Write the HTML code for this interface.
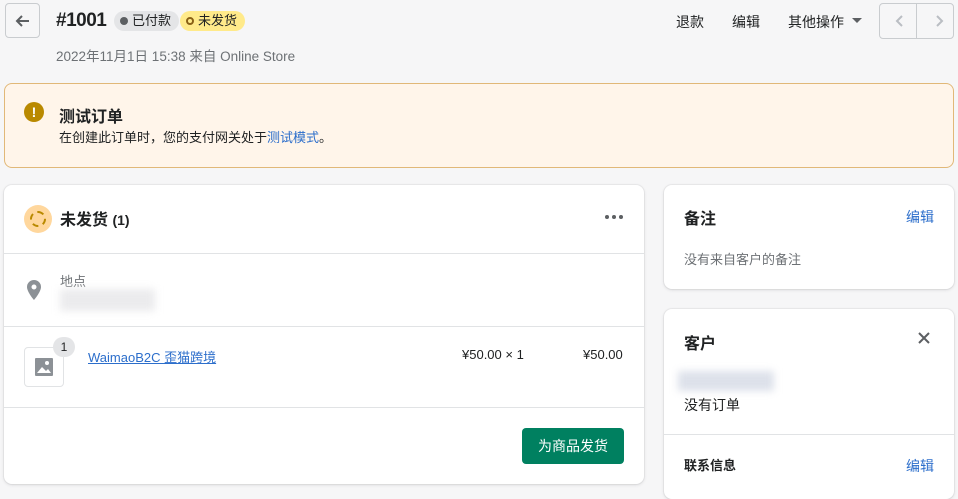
<!DOCTYPE html><html><head><meta charset="utf-8"><style>
*{box-sizing:border-box;margin:0;padding:0}
body{width:958px;height:487px;overflow:hidden;background:#f6f6f7;font-family:"Liberation Sans","Noto Sans CJK SC",sans-serif;color:#202223;font-size:14px;position:relative}
.a{position:absolute}
.card{position:absolute;background:#fff;border-radius:8px;box-shadow:0 0 0 1px rgba(63,63,68,.05),0 1px 3px rgba(63,63,68,.15)}
.hr{position:absolute;left:0;right:0;height:1px;background:#e1e3e5}
.link{color:#2c6ecb}
</style></head><body>
<div class="a" style="left:5px;top:3px;width:35px;height:35px;border:1px solid #c9cccf;border-radius:4px;background:#f6f6f7"></div>
<svg class="a" style="left:13px;top:11px" width="20" height="20" viewBox="0 0 20 20"><path d="M16 10H4M9 5l-5 5 5 5" stroke="#5c5f62" stroke-width="2" fill="none"/></svg>
<div class="a" style="left:56px;top:10px;font-size:19px;font-weight:bold;letter-spacing:-0.5px">#1001</div>
<div class="a" style="left:114px;top:11px;height:20px;padding:0 8px 0 18px;background:#e4e5e7;border-radius:10px;font-size:13px;line-height:20px">已付款</div>
<div class="a" style="left:120px;top:17px;width:8px;height:8px;border-radius:50%;background:#5c5f62"></div>
<div class="a" style="left:180px;top:11px;height:20px;padding:0 8px 0 18px;background:#ffea8a;border-radius:10px;font-size:13px;line-height:20px">未发货</div>
<div class="a" style="left:186px;top:17px;width:8px;height:8px;border-radius:50%;border:2px solid #8a6116"></div>
<div class="a" style="left:56px;top:45px;font-size:13.5px;color:#6d7175">2022年11月1日 15:38 来自 Online Store</div>
<div class="a" style="left:676px;top:12px">退款</div>
<div class="a" style="left:732px;top:12px">编辑</div>
<div class="a" style="left:788px;top:12px">其他操作</div>
<svg class="a" style="left:852px;top:17px" width="10" height="8"><path d="M0 1h10L5 6z" fill="#5c5f62"/></svg>
<div class="a" style="left:879px;top:3px;width:75px;height:36px;border:1px solid #c9cccf;border-radius:4px"></div>
<div class="a" style="left:916px;top:4px;width:1px;height:34px;background:#c9cccf"></div>
<svg class="a" style="left:890px;top:13px" width="60" height="16"><path d="M12 3l-5 5 5 5M47 3l5 5-5 5" stroke="#babec3" stroke-width="2" fill="none"/></svg>
<div class="a" style="left:4px;top:83px;width:950px;height:85px;background:#fff5ea;border:1px solid #e1b878;border-radius:8px"></div>
<div class="a" style="left:24px;top:102px;width:20px;height:20px;border-radius:50%;background:#b98900;color:#fff;font-weight:bold;font-size:14px;text-align:center;line-height:20px">!</div>
<div class="a" style="left:59px;top:103px;font-size:16px;font-weight:bold">测试订单</div>
<div class="a" style="left:59px;top:127px;font-size:13px">在创建此订单时，您的支付网关处于<span class="link">测试模式</span>。</div>
<div class="card" style="left:4px;top:185px;width:640px;height:299px">
 <div class="a" style="left:20px;top:20px;width:28px;height:28px;border-radius:50%;background:#ffd79d"></div>
 <div class="a" style="left:26px;top:26px;width:16px;height:16px;border-radius:50%;border:2px dashed #b98900"></div>
 <div class="a" style="left:56px;top:21px;font-size:16px;font-weight:bold">未发货 <span style="font-size:14px">(1)</span></div>
 <svg class="a" style="left:600px;top:29px" width="20" height="6"><circle cx="3" cy="3" r="2" fill="#5c5f62"/><circle cx="10" cy="3" r="2" fill="#5c5f62"/><circle cx="17" cy="3" r="2" fill="#5c5f62"/></svg>
 <div class="hr" style="top:68px"></div>
 <svg class="a" style="left:22px;top:95px" width="16" height="20" viewBox="0 0 16 20"><path d="M8 0a7 7 0 0 0-7 7c0 5 7 13 7 13s7-8 7-13a7 7 0 0 0-7-7zm0 9.5a2.5 2.5 0 1 1 0-5 2.5 2.5 0 0 1 0 5z" fill="#8c9196"/></svg>
 <div class="a" style="left:56px;top:86px;font-size:13px;color:#6d7175">地点</div>
 <div class="a" style="left:56px;top:104px;width:95px;height:22px;background:#ebebed;filter:blur(4px)"></div>
 <div class="hr" style="top:141px"></div>
 <div class="a" style="left:20px;top:162px;width:40px;height:40px;border:1px solid #e1e3e5;border-radius:4px"></div>
 <svg class="a" style="left:31px;top:173px" width="18" height="18"><rect x="0" y="0" width="18" height="18" rx="1" fill="#8c9196"/><path d="M2 15l5-6 4 4 2-2 3 4z" fill="#fff"/><circle cx="12" cy="5" r="2" fill="#fff"/></svg>
 <div class="a" style="left:49px;top:152px;width:22px;height:20px;border-radius:10px;background:#e4e5e7;font-size:12px;text-align:center;line-height:20px">1</div>
 <div class="a link" style="left:84px;top:162px;font-size:13px;text-decoration:underline">WaimaoB2C 歪猫跨境</div>
 <div class="a" style="left:458px;top:162px;font-size:13px">¥50.00 × 1</div>
 <div class="a" style="left:579px;top:162px;font-size:13px">¥50.00</div>
 <div class="hr" style="top:222px"></div>
 <div class="a" style="left:518px;top:243px;width:102px;height:36px;background:#008060;border-radius:4px;color:#fff;text-align:center;line-height:36px;font-size:14px">为商品发货</div>
</div>
<div class="card" style="left:664px;top:185px;width:290px;height:104px">
 <div class="a" style="left:20px;top:20px;font-size:16px;font-weight:bold">备注</div>
 <div class="a link" style="left:242px;top:22px">编辑</div>
 <div class="a" style="left:20px;top:64px;font-size:13px;color:#6d7175">没有来自客户的备注</div>
</div>
<div class="card" style="left:664px;top:309px;width:290px;height:190px">
 <div class="a" style="left:20px;top:21px;font-size:16px;font-weight:bold">客户</div>
 <svg class="a" style="left:254px;top:23px" width="12" height="12"><path d="M1 1l10 10M11 1L1 11" stroke="#5c5f62" stroke-width="2"/></svg>
 <div class="a" style="left:14px;top:62px;width:96px;height:20px;background:#dde1ea;filter:blur(4px)"></div>
 <div class="a" style="left:20px;top:86px;font-size:14px">没有订单</div>
 <div class="hr" style="top:125px"></div>
 <div class="a" style="left:20px;top:146px;font-size:13px;font-weight:bold">联系信息</div>
 <div class="a link" style="left:242px;top:147px">编辑</div>
</div>
</body></html>
